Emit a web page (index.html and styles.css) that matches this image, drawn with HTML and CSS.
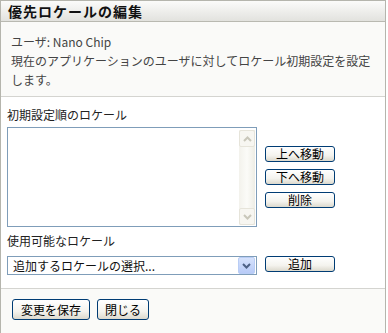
FILE: index.html
```html
<!DOCTYPE html>
<html lang="ja">
<head>
    <meta charset="UTF-8">
    <meta name="viewport" content="width=device-width, initial-scale=1.0">
    <title>優先ロケールの編集</title>
    <link rel="stylesheet" href="styles.css">
</head>
<body>

<div class="panel">
    <div class="panel-head">
        <h1>優先ロケールの編集</h1>
    </div>

    <div class="intro">
        <p>ユーザ: Nano Chip</p>
        <p>現在のアプリケーションのユーザに対してロケール初期設定を設定します。</p>
    </div>

    <div class="locales">
        <label class="field-label" for="localeList">初期設定順のロケール</label>
        <div class="list-row">
            <div class="listbox" id="localeList">
                <div class="list-items"></div>
                <div class="scrollbar">
                    <div class="scroll-btn">
                        <svg width="9" height="6" viewBox="0 0 9 6"><path d="M1 5 L4.5 1.5 L8 5" fill="none" stroke="#c9c7ba" stroke-width="2"/></svg>
                    </div>
                    <div class="scroll-track"></div>
                    <div class="scroll-btn">
                        <svg width="9" height="6" viewBox="0 0 9 6"><path d="M1 1 L4.5 4.5 L8 1" fill="none" stroke="#c9c7ba" stroke-width="2"/></svg>
                    </div>
                </div>
            </div>
            <div class="list-actions">
                <button class="btn">上へ移動</button>
                <button class="btn">下へ移動</button>
                <button class="btn">削除</button>
            </div>
        </div>

        <label class="field-label second" for="addLocale">使用可能なロケール</label>
        <div class="list-row add-row">
            <div class="select" id="addLocale">
                <span class="select-text">追加するロケールの選択...</span>
                <span class="select-arrow">
                    <svg width="9" height="6" viewBox="0 0 9 6"><path d="M1 1 L4.5 4.5 L8 1" fill="none" stroke="#4d6185" stroke-width="2"/></svg>
                </span>
            </div>
            <button class="btn">追加</button>
        </div>
    </div>

    <div class="panel-foot">
        <button class="btn btn-big save">変更を保存</button>
        <button class="btn btn-big close">閉じる</button>
    </div>
</div>

</body>
</html>
```

FILE: styles.css
```css
body {
    margin: 0;
    font-family: "Noto Sans CJK JP", "DejaVu Sans", sans-serif;
    font-size: 12px;
    color: #222;
    background: #fff;
    overflow: hidden;
}
.panel {
    display: flex;
    flex-direction: column;
    width: 384px;
    height: 332px;
    border: 1px solid #b5b5ad;
    border-bottom: none;
    background: #fff;
}
.panel-head {
    height: 20px;
    border-bottom: 1px solid #b9b9b1;
    background: linear-gradient(#fbfbfa, #e2e2de);
}
.panel-head h1 {
    margin: 0;
    padding-left: 7px;
    font-size: 14px;
    line-height: 20px;
    font-weight: bold;
    color: #111;
    letter-spacing: 1px;
}
.intro {
    padding: 10px 10px 7px 10px;
    background: #fafaf8;
    border-bottom: 1px solid #d4d4d0;
    color: #444;
}
.intro p {
    margin: 0;
    line-height: 19px;
}
.locales {
    padding: 9px 6px 13px 6px;
    border-bottom: 1px solid #d4d4d0;
}
.field-label {
    display: block;
    line-height: 18px;
    color: #222;
}
.field-label.second {
    margin-top: 5px;
}
.list-row {
    display: flex;
    align-items: center;
    gap: 8px;
    margin-top: 3px;
}
.add-row {
    margin-top: 6px;
    align-items: flex-start;
}
.listbox {
    display: flex;
    width: 248px;
    height: 98px;
    border: 1px solid #7f9db9;
    background: #fff;
}
.list-items {
    flex: 1;
}
.scrollbar {
    display: flex;
    flex-direction: column;
    width: 16px;
    margin: 2px 1px 1px 0;
    background: linear-gradient(to right, #f3f2ec, #fbfbf8, #eeede5);
}
.scroll-btn {
    display: flex;
    align-items: center;
    justify-content: center;
    height: 15px;
    border: 1px solid #e6e4da;
    border-radius: 2px;
    background: #f7f6f1;
}
.scroll-track {
    flex: 1;
}
.list-actions {
    display: flex;
    flex-direction: column;
    gap: 7px;
}
.btn {
    width: 70px;
    height: 16px;
    padding: 0;
    border: 1px solid #003c74;
    border-radius: 3px;
    background: linear-gradient(#ffffff, #f4f3ee 60%, #dcd9cd);
    font-family: inherit;
    font-size: 12px;
    line-height: 14px;
    color: #000;
}
.select {
    display: flex;
    align-items: center;
    width: 248px;
    height: 17px;
    border: 1px solid #7f9db9;
    background: #fff;
}
.select-text {
    flex: 1;
    padding-left: 5px;
    line-height: 17px;
    color: #111;
}
.select-arrow {
    display: flex;
    align-items: center;
    justify-content: center;
    width: 15px;
    height: 15px;
    margin-right: 1px;
    border: 1px solid #b9cdf5;
    border-radius: 2px;
    background: linear-gradient(#d6e2fc, #b8cbf7);
}
.panel-foot {
    flex: 1;
    display: flex;
    align-items: flex-start;
    gap: 7px;
    padding: 10px 11px;
    background: #fafaf8;
}
.btn-big {
    height: 21px;
    line-height: 19px;
}
.save {
    width: 78px;
}
.close {
    width: 52px;
}
```
